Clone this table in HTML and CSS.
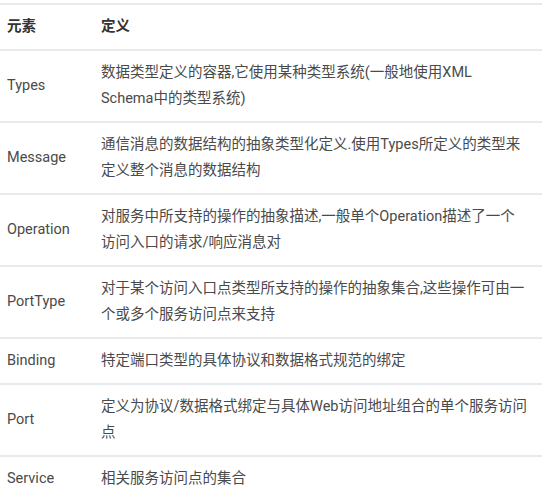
FILE: index.html
```html
<!DOCTYPE html>
<html lang="zh">
<head>
<meta charset="utf-8">
<link rel="stylesheet" href="styles.css">
</head>
<body>
<table class="defs">
  <thead>
    <tr><th class="c-name">元素</th><th class="c-def">定义</th></tr>
  </thead>
  <tbody>
    <tr><td>Types</td><td>数据类型定义的容器,它使用某种类型系统(一般地使用XML<br>Schema中的类型系统)</td></tr>
    <tr><td>Message</td><td>通信消息的数据结构的抽象类型化定义.使用Types所定义的类型来定义整个消息的数据结构</td></tr>
    <tr><td>Operation</td><td>对服务中所支持的操作的抽象描述,一般单个Operation描述了一个访问入口的请求/响应消息对</td></tr>
    <tr><td>PortType</td><td>对于某个访问入口点类型所支持的操作的抽象集合,这些操作可由一个或多个服务访问点来支持</td></tr>
    <tr><td>Binding</td><td>特定端口类型的具体协议和数据格式规范的绑定</td></tr>
    <tr><td>Port</td><td>定义为协议/数据格式绑定与具体Web访问地址组合的单个服务访问点</td></tr>
    <tr><td>Service</td><td>相关服务访问点的集合</td></tr>
  </tbody>
</table>
</body>
</html>
```
FILE: styles.css
```css
html, body {
  margin: 0;
  padding: 0;
  background: #fff;
}
body {
  padding-top: 3px;
  font-family: Roboto, "Noto Sans CJK SC", sans-serif;
  font-size: 14.5px;
  color: #4a4a4a;
}
.defs {
  width: 542px;
  border-collapse: collapse;
  table-layout: fixed;
}
.defs th, .defs td {
  border-top: 2px solid #e7eaef;
  border-bottom: 2px solid #e7eaef;
  padding: 9px 14px 9px 7px;
  line-height: 26px;
  text-align: left;
  vertical-align: middle;
}
.defs th {
  font-weight: bold;
  color: #333;
}
.c-name { width: 73px; }
```
